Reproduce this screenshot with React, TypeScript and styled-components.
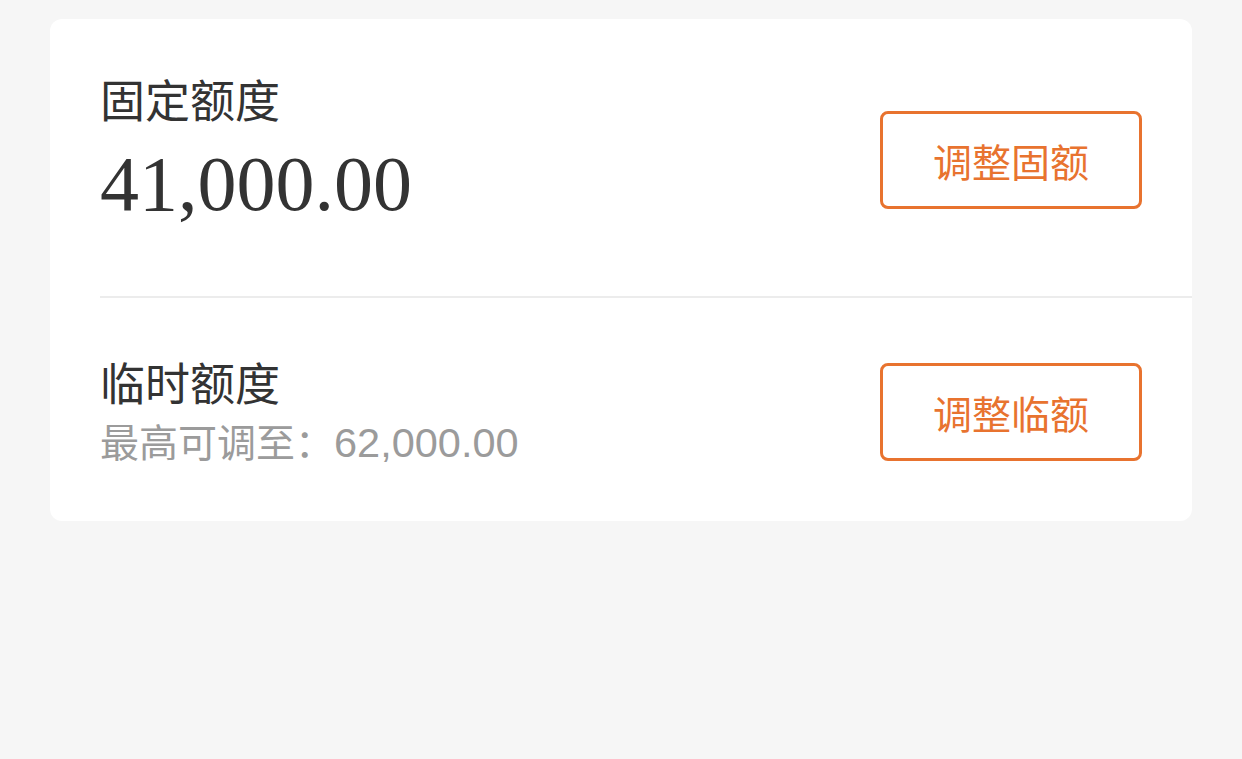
import React from "react";
import styled, { createGlobalStyle } from "styled-components";

const Global = createGlobalStyle`
  html, body {
    margin: 0;
    padding: 0;
    background: #f6f6f6;
  }
  body {
    font-family: "Noto Sans CJK SC", "Noto Sans", sans-serif;
    color: #333333;
  }
`;

const Page = styled.div`
  padding: 19px 50px 0 50px;
  min-height: 759px;
  box-sizing: border-box;
`;

const Card = styled.div`
  background: #ffffff;
  border-radius: 12px;
  padding-left: 50px;
  overflow: hidden;
`;

const Row = styled.div<{ $h: number; $divider?: boolean }>`
  display: flex;
  align-items: center;
  justify-content: space-between;
  height: ${(p) => p.$h}px;
  padding: 4px 50px 0 0;
  box-sizing: border-box;
  border-bottom: ${(p) => (p.$divider ? "2px solid #ececec" : "none")};
`;

const Info = styled.div<{ $lift?: number }>`
  display: flex;
  flex-direction: column;
  margin-bottom: ${(p) => (p.$lift ?? 0) * 2}px;
`;

const Label = styled.div`
  font-family: "Noto Sans CJK SC", sans-serif;
  font-size: 45px;
  line-height: 54px;
  color: #333333;
`;

const Amount = styled.div`
  font-family: "Liberation Serif", "Times New Roman", serif;
  font-size: 78px;
  line-height: 80px;
  color: #333333;
  margin-top: 18px;
`;

const Sub = styled.div`
  font-family: "Noto Sans CJK SC", sans-serif;
  font-size: 39px;
  line-height: 50px;
  color: #9b9b9b;
  margin-top: 6px;
`;

const Num = styled.span`
  font-family: "Liberation Sans", Arial, sans-serif;
  font-size: 41.5px;
`;

const Button = styled.button`
  width: 262px;
  height: 98px;
  box-sizing: border-box;
  border: 3px solid #e8732f;
  border-radius: 8px;
  background: #ffffff;
  color: #e8732f;
  font-family: "Noto Sans CJK SC", sans-serif;
  font-size: 39px;
  padding: 0;
  cursor: pointer;
`;

export default function App() {
  return (
    <>
      <Global />
      <Page>
        <Card>
          <Row $h={279} $divider>
            <Info $lift={12}>
              <Label>固定额度</Label>
              <Amount>41,000.00</Amount>
            </Info>
            <Button>调整固额</Button>
          </Row>
          <Row $h={223}>
            <Info>
              <Label>临时额度</Label>
              <Sub>
                最高可调至：<Num>62,000.00</Num>
              </Sub>
            </Info>
            <Button>调整临额</Button>
          </Row>
        </Card>
      </Page>
    </>
  );
}
